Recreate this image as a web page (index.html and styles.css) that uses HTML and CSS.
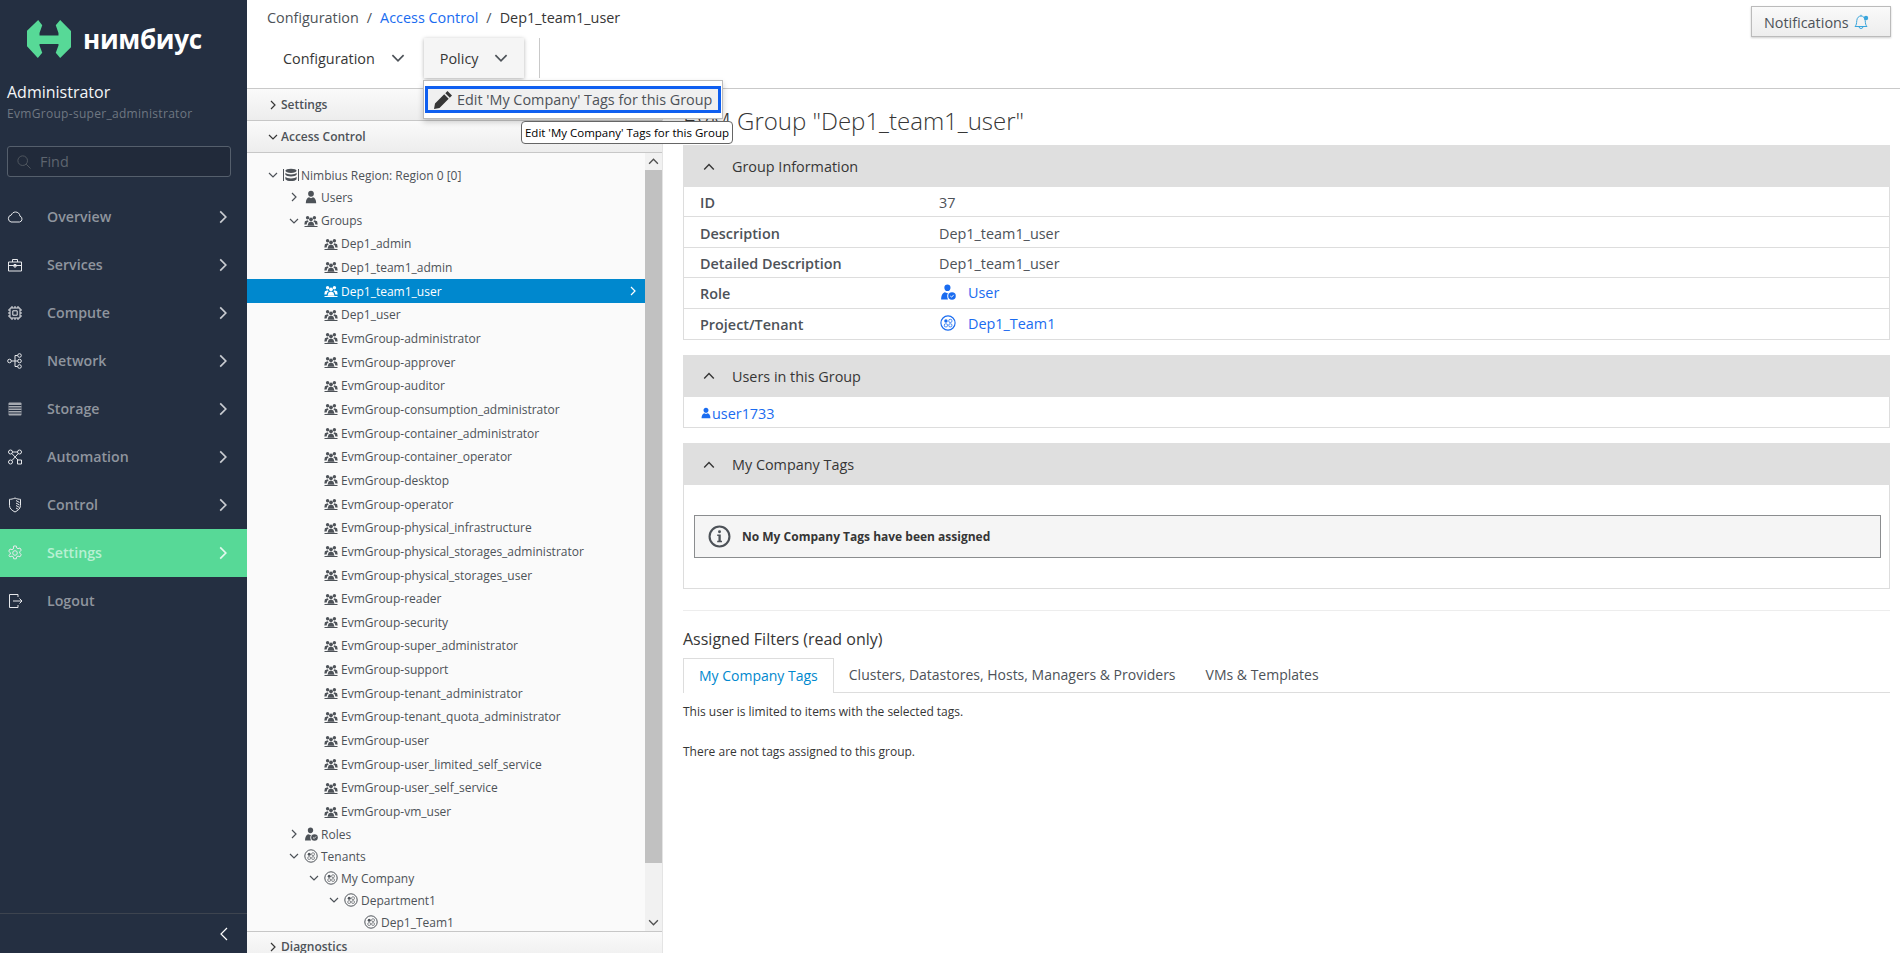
FILE: index.html
```html
<!DOCTYPE html>
<html lang="en">
<head>
<meta charset="utf-8">
<title>Access Control</title>
<link rel="stylesheet" href="styles.css">
</head>
<body>
<svg class="defs" aria-hidden="true">
  <symbol id="chev-r" viewBox="0 0 10 10"><path d="M3 1l4 4-4 4" fill="none" stroke="currentColor" stroke-width="1.2"/></symbol>
  <symbol id="chev-d" viewBox="0 0 10 10"><path d="M1 3l4 4 4-4" fill="none" stroke="currentColor" stroke-width="1.2"/></symbol>
  <symbol id="chev-u" viewBox="0 0 10 10"><path d="M1 7l4-4 4 4" fill="none" stroke="currentColor" stroke-width="1.2"/></symbol>
  <symbol id="group" viewBox="0 0 14 14"><g fill="currentColor"><circle cx="3.600" cy="3.800" r="1.700"/><circle cx="10.400" cy="3.800" r="1.700"/><circle cx="7" cy="5.300" r="1.900"/><path d="M.3 10.500l.6-3.200 2.600-1 1.200.9-1.500 1.300-.6 2zM13.700 10.500l-.6-3.200-2.600-1-1.200.9 1.500 1.300.6 2zM3.500 11.700l1.100-3.100 2.400-1 2.400 1 1.100 3.100z"/><path d="M.5 12h13v1H.5z"/></g></symbol>
  <symbol id="user" viewBox="0 0 14 14"><path fill="currentColor" d="M7 .8c1.700 0 2.900 1.200 2.900 2.900S8.700 6.700 7 6.700 4.100 5.400 4.100 3.700 5.300.8 7 .8zM1.800 13.200c0-3.500 1.600-5.700 3.200-5.900L7 8.200l2-.9c1.600.2 3.200 2.400 3.200 5.900z"/></symbol>
  <symbol id="role" viewBox="0 0 14 14"><path fill="currentColor" d="M6.500.5c1.600 0 2.700 1.100 2.700 2.700S8.100 6.200 6.500 6.200 3.800 4.900 3.800 3.200 4.900.5 6.500.5zM1 13.500c0-3.800 1.700-6 3.300-6.300l2.200.9 1-.4C6.200 8.500 5.800 10.800 7 13.500z"/><circle cx="10.500" cy="10.500" r="3.300" fill="currentColor"/><path d="M9 10.500l1.200 1 1.800-2" fill="none" stroke="#fff" stroke-width=".8"/></symbol>
  <symbol id="tenant" viewBox="0 0 14 14"><circle cx="7" cy="7" r="6.200" fill="none" stroke="currentColor"/><circle cx="5.200" cy="5.200" r="1.500" fill="currentColor"/><rect x="7.700" y="3.800" width="2.700" height="2.700" rx="1" fill="none" stroke="currentColor" stroke-width=".7"/><rect x="3.800" y="7.700" width="2.700" height="2.700" rx="1" fill="none" stroke="currentColor" stroke-width=".7"/><rect x="7.700" y="7.700" width="2.700" height="2.700" rx="1" fill="none" stroke="currentColor" stroke-width=".7"/></symbol>
  <symbol id="database" viewBox="0 0 16 14"><path d="M.5 1v12M15.500 1v12" stroke="currentColor" fill="none"/><ellipse cx="8" cy="2.800" rx="5.600" ry="2.100" fill="currentColor"/><path fill="currentColor" d="M2.400 4.800c1 1.200 3 1.600 5.600 1.600s4.600-.4 5.600-1.600v2c-1 1.200-3 1.600-5.600 1.600s-4.600-.4-5.600-1.600zM2.400 8.800c1 1.200 3 1.600 5.600 1.600s4.600-.4 5.600-1.600v2.400c-1 1.300-3 1.800-5.600 1.800s-4.600-.5-5.600-1.800z"/></symbol>
</svg>

<div class="app">
  <aside class="sidebar">
    <div class="brand">
      <svg class="brand-mark" viewBox="0 0 130 113"><path fill="#57d997" d="M33 0l12 16-8 23v7h56v-7l-8-23 13-16 32 33 1 47-33 33-13-16 8-21v-5H37v5l8 21-13 16L0 78V32z"/></svg>
      <span class="brand-name">нимбиус</span>
    </div>
    <div class="profile">
      <div class="profile-name">Administrator</div>
      <div class="profile-group">EvmGroup-super_administrator</div>
    </div>
    <div class="find">
      <svg class="find-icon" viewBox="0 0 16 16"><circle cx="6.500" cy="6.500" r="5.500" fill="none" stroke="currentColor"/><path d="M10.500 10.500l5 5" stroke="currentColor"/></svg>
      <span>Find</span>
    </div>
    <nav class="nav">
      <a class="nav-item"><svg class="nav-icon" viewBox="0 0 16 16"><path d="M4 13h8.500a3 3 0 0 0 .5-5.800C12.700 4.500 10.800 3 8.500 3 6.500 3 5 4.200 4.300 6A3.600 3.600 0 0 0 4 13z"/></svg><span class="nav-label">Overview</span><svg class="nav-chev"><use href="#chev-r"/></svg></a>
      <a class="nav-item"><svg class="nav-icon" viewBox="0 0 16 16"><path d="M1.500 5h13v9h-13zM5.500 5V2.500h5V5M1.500 8.500h13"/><path d="M7 7.500h2v2.500H7z"/></svg><span class="nav-label">Services</span><svg class="nav-chev"><use href="#chev-r"/></svg></a>
      <a class="nav-item"><svg class="nav-icon" viewBox="0 0 16 16"><path d="M3 3h10v10H3z"/><path d="M5.800 5.800h4.400v4.400H5.800z"/><path d="M5 1v2M8 1v2M11 1v2M5 13v2M8 13v2M11 13v2M1 5h2M1 8h2M1 11h2M13 5h2M13 8h2M13 11h2"/></svg><span class="nav-label">Compute</span><svg class="nav-chev"><use href="#chev-r"/></svg></a>
      <a class="nav-item"><svg class="nav-icon" viewBox="0 0 16 16"><circle cx="2.500" cy="8" r="1.800"/><circle cx="12.500" cy="2.500" r="1.800"/><circle cx="12.500" cy="8" r="1.800"/><circle cx="12.500" cy="13.500" r="1.800"/><path d="M4.300 8h6.400M8 8V2.500h2.700M8 8v5.500h2.700"/></svg><span class="nav-label">Network</span><svg class="nav-chev"><use href="#chev-r"/></svg></a>
      <a class="nav-item"><svg class="nav-icon" viewBox="0 0 16 16"><rect x="1.500" y="1.500" width="13" height="13" rx="1" fill="#a5a9b0" stroke="none"/><path class="nav-cut" d="M1.500 4.500h13M1.500 7h13M1.500 9.500h13M1.500 12h13"/></svg><span class="nav-label">Storage</span><svg class="nav-chev"><use href="#chev-r"/></svg></a>
      <a class="nav-item"><svg class="nav-icon" viewBox="0 0 16 16"><circle cx="3.500" cy="3" r="2"/><circle cx="12.500" cy="3" r="2"/><circle cx="3.500" cy="13" r="2"/><path d="M10.500 11h4v4h-4zM5.500 3h5M4.800 4.500l6.200 6.500M11.200 4.600L5 11.500"/></svg><span class="nav-label">Automation</span><svg class="nav-chev"><use href="#chev-r"/></svg></a>
      <a class="nav-item"><svg class="nav-icon" viewBox="0 0 16 16"><path d="M8 1c2 1 4 1.300 5.500 1.300v6.200c0 3-2.500 5-5.500 6.500-3-1.500-5.500-3.500-5.500-6.500V2.300C4 2.300 6 2 8 1z"/><path d="M9 3.500l3.500 2M9 6l3.500 2M9 8.500l3.500 2M9 11l2 1.200"/></svg><span class="nav-label">Control</span><svg class="nav-chev"><use href="#chev-r"/></svg></a>
      <a class="nav-item nav-active"><svg class="nav-icon" viewBox="0 0 16 16"><path d="M6.700 1h2.600l.4 2 1.300.7 2-.7 1.300 2.300-1.600 1.300v1.600l1.600 1.300-1.300 2.300-2-.7-1.300.7-.4 2H6.700l-.4-2-1.300-.7-2 .7L1.700 10.500 3.300 9.200V7.600L1.700 6.300 3 4l2 .7 1.300-.7z"/><circle cx="8" cy="8" r="2.300"/></svg><span class="nav-label">Settings</span><svg class="nav-chev"><use href="#chev-r"/></svg></a>
      <a class="nav-item"><svg class="nav-icon" viewBox="0 0 16 16"><path d="M11 4V1.500H2.500v13H11V12M6 8h9M12.500 5.500L15 8l-2.500 2.500"/></svg><span class="nav-label">Logout</span></a>
    </nav>
    <div class="collapse"><svg class="back" viewBox="0 0 10 14"><path d="M8 1L2 7l6 6" fill="none" stroke="currentColor" stroke-width="1.200"/></svg></div>
  </aside>

  <div class="workspace">
    <header class="topbar">
      <div class="topbar-left">
        <div class="crumbs"><span>Configuration</span><span class="sep">/</span><a class="link">Access Control</a><span class="sep">/</span><span class="crumb-now">Dep1_team1_user</span></div>
        <div class="toolbar">
          <button class="tool tool-first">Configuration<svg class="tool-chev"><use href="#chev-d"/></svg></button>
          <button class="tool tool-open">Policy<svg class="tool-chev"><use href="#chev-d"/></svg></button>
          <span class="tool-sep"></span>
        </div>
      </div>
      <button class="notify">Notifications<svg class="bell" viewBox="0 0 16 16"><path d="M2 12.500c1.500-1.500 1.500-3 1.800-6C4 3.800 5.800 2 8 2s4 1.800 4.200 4.500c.3 3 .3 4.500 1.800 6zM6 12.500a2 2 0 0 0 4 0M8 2V.8" fill="none" stroke="currentColor"/><circle cx="13" cy="4" r="2.200" fill="currentColor"/></svg></button>
    </header>

    <div class="columns">
      <div class="accordion">
        <div class="acc-head"><svg class="acc-chev"><use href="#chev-r"/></svg>Settings</div>
        <div class="acc-head"><svg class="acc-chev"><use href="#chev-d"/></svg>Access Control</div>
        <div class="tree-wrap">
          <ul class="tree">
            <li class="row l0"><svg class="tw"><use href="#chev-d"/></svg><svg class="ti ti-db"><use href="#database"/></svg><span class="tt">Nimbius Region: Region 0 [0]</span></li>
            <li class="row l1"><svg class="tw"><use href="#chev-r"/></svg><svg class="ti"><use href="#user"/></svg>Users</li>
            <li class="row l1 r-groups"><svg class="tw"><use href="#chev-d"/></svg><svg class="ti"><use href="#group"/></svg>Groups</li>
            <li class="row l2 g"><svg class="ti"><use href="#group"/></svg>Dep1_admin</li>
            <li class="row l2 g"><svg class="ti"><use href="#group"/></svg>Dep1_team1_admin</li>
            <li class="row l2 g selected"><svg class="ti"><use href="#group"/></svg>Dep1_team1_user<svg class="sel-chev"><use href="#chev-r"/></svg></li>
            <li class="row l2 g"><svg class="ti"><use href="#group"/></svg>Dep1_user</li>
            <li class="row l2 g"><svg class="ti"><use href="#group"/></svg>EvmGroup-administrator</li>
            <li class="row l2 g"><svg class="ti"><use href="#group"/></svg>EvmGroup-approver</li>
            <li class="row l2 g"><svg class="ti"><use href="#group"/></svg>EvmGroup-auditor</li>
            <li class="row l2 g"><svg class="ti"><use href="#group"/></svg>EvmGroup-consumption_administrator</li>
            <li class="row l2 g"><svg class="ti"><use href="#group"/></svg>EvmGroup-container_administrator</li>
            <li class="row l2 g"><svg class="ti"><use href="#group"/></svg>EvmGroup-container_operator</li>
            <li class="row l2 g"><svg class="ti"><use href="#group"/></svg>EvmGroup-desktop</li>
            <li class="row l2 g"><svg class="ti"><use href="#group"/></svg>EvmGroup-operator</li>
            <li class="row l2 g"><svg class="ti"><use href="#group"/></svg>EvmGroup-physical_infrastructure</li>
            <li class="row l2 g"><svg class="ti"><use href="#group"/></svg>EvmGroup-physical_storages_administrator</li>
            <li class="row l2 g"><svg class="ti"><use href="#group"/></svg>EvmGroup-physical_storages_user</li>
            <li class="row l2 g"><svg class="ti"><use href="#group"/></svg>EvmGroup-reader</li>
            <li class="row l2 g"><svg class="ti"><use href="#group"/></svg>EvmGroup-security</li>
            <li class="row l2 g"><svg class="ti"><use href="#group"/></svg>EvmGroup-super_administrator</li>
            <li class="row l2 g"><svg class="ti"><use href="#group"/></svg>EvmGroup-support</li>
            <li class="row l2 g"><svg class="ti"><use href="#group"/></svg>EvmGroup-tenant_administrator</li>
            <li class="row l2 g"><svg class="ti"><use href="#group"/></svg>EvmGroup-tenant_quota_administrator</li>
            <li class="row l2 g"><svg class="ti"><use href="#group"/></svg>EvmGroup-user</li>
            <li class="row l2 g"><svg class="ti"><use href="#group"/></svg>EvmGroup-user_limited_self_service</li>
            <li class="row l2 g"><svg class="ti"><use href="#group"/></svg>EvmGroup-user_self_service</li>
            <li class="row l2 g"><svg class="ti"><use href="#group"/></svg>EvmGroup-vm_user</li>
            <li class="row l1"><svg class="tw"><use href="#chev-r"/></svg><svg class="ti"><use href="#role"/></svg>Roles</li>
            <li class="row l1"><svg class="tw"><use href="#chev-d"/></svg><svg class="ti"><use href="#tenant"/></svg>Tenants</li>
            <li class="row l2"><svg class="tw"><use href="#chev-d"/></svg><svg class="ti"><use href="#tenant"/></svg>My Company</li>
            <li class="row l3"><svg class="tw"><use href="#chev-d"/></svg><svg class="ti"><use href="#tenant"/></svg>Department1</li>
            <li class="row l4"><svg class="ti"><use href="#tenant"/></svg>Dep1_Team1</li>
          </ul>
          <div class="scrollbar">
            <span class="sb-btn"><svg class="sb-arrow"><use href="#chev-u"/></svg></span>
            <span class="sb-thumb"></span>
            <span class="sb-rest"></span>
            <span class="sb-btn"><svg class="sb-arrow"><use href="#chev-d"/></svg></span>
          </div>
        </div>
        <div class="acc-head acc-last"><svg class="acc-chev"><use href="#chev-r"/></svg>Diagnostics</div>
      </div>

      <main class="main">
        <h1 class="title">EVM Group "Dep1_team1_user"</h1>

        <section class="panel">
          <h2 class="panel-head"><svg class="panel-chev"><use href="#chev-u"/></svg>Group Information</h2>
          <div class="kv"><span class="k">ID</span><span class="v">37</span></div>
          <div class="kv"><span class="k">Description</span><span class="v">Dep1_team1_user</span></div>
          <div class="kv"><span class="k">Detailed Description</span><span class="v">Dep1_team1_user</span></div>
          <div class="kv"><span class="k">Role</span><a class="v link v-icon"><svg class="kv-icon"><use href="#role"/></svg>User</a></div>
          <div class="kv"><span class="k">Project/Tenant</span><a class="v link v-icon"><svg class="kv-icon"><use href="#tenant"/></svg>Dep1_Team1</a></div>
        </section>

        <section class="panel">
          <h2 class="panel-head"><svg class="panel-chev"><use href="#chev-u"/></svg>Users in this Group</h2>
          <div class="kv"><a class="link user-link"><svg class="user-icon"><use href="#user"/></svg>user1733</a></div>
        </section>

        <section class="panel">
          <h2 class="panel-head"><svg class="panel-chev"><use href="#chev-u"/></svg>My Company Tags</h2>
          <div class="panel-body">
            <div class="alert"><svg class="alert-icon" viewBox="0 0 22 22"><circle cx="11" cy="11" r="9.500" fill="none" stroke="currentColor" stroke-width="2"/><circle cx="11" cy="6.500" r="1.400" fill="currentColor"/><path fill="currentColor" d="M8.800 9h3.400v6h1.200v1.500H8.800V15H10v-4.500H8.800z"/></svg>No My Company Tags have been assigned</div>
          </div>
        </section>

        <hr class="rule">
        <h3 class="sub">Assigned Filters (read only)</h3>
        <div class="tabs">
          <span class="tab tab-on">My Company Tags</span>
          <span class="tab">Clusters, Datastores, Hosts, Managers &amp; Providers</span>
          <span class="tab">VMs &amp; Templates</span>
        </div>
        <p class="note">This user is limited to items with the selected tags.</p>
        <p class="note note-2">There are not tags assigned to this group.</p>
      </main>
    </div>
  </div>

  <div class="menu">
    <div class="menu-item"><svg class="pencil" viewBox="0 0 20 20"><path fill="currentColor" d="M14.500 1l4.500 4.500-2.200 2.200-4.500-4.500zM11.200 4.300l4.500 4.500L6.500 18 1 19l1-5.500z"/></svg>Edit 'My Company' Tags for this Group</div>
  </div>
  <div class="tooltip">Edit 'My Company' Tags for this Group</div>
</div>
</body>
</html>
```
FILE: styles.css
```css
* { box-sizing: border-box; }
html, body { margin: 0; height: 100%; overflow: hidden; }
body { font-family: "Open Sans", "Liberation Sans", sans-serif; font-size: 14.4px; color: #4d5258; background: #fff; }
.defs { position: absolute; width: 0; height: 0; }
.app { position: relative; display: flex; width: 1900px; height: 953px; overflow: hidden; }
.link { color: #1a6cf0; }

/* sidebar */
.sidebar { width: 247px; flex: none; background: #242f41; display: flex; flex-direction: column; color: #fff; }
.brand { display: flex; align-items: center; height: 76px; padding: 2px 0 0 27px; }
.brand-mark { width: 44px; height: 40px; }
.brand-name { margin-left: 12px; font-size: 26px; font-weight: 700; line-height: 30px; color: #fff; letter-spacing: -.3px; }
.profile { padding: 4px 7px 0; }
.profile-name { font-size: 16px; line-height: 24px; color: #f4f6f8; }
.profile-group { margin-top: 1px; font-size: 12px; line-height: 18px; color: #6f7782; letter-spacing: .3px; }
.find { display: flex; align-items: center; margin: 23px 16px 0 7px; height: 31px; background: #212a3a; border: 1px solid #555f6c; border-radius: 3px; font-size: 14.4px; color: #5e656f; padding-left: 9px; }
.find-icon { width: 14px; height: 14px; margin-right: 9px; color: #555b64; }
.nav { margin-top: 16px; display: flex; flex-direction: column; }
.nav-item { display: flex; align-items: center; height: 48px; padding: 0 0 1px 7px; font-size: 14.2px; font-weight: 600; color: #8f959e; }
.nav-icon { width: 16px; height: 16px; fill: none; stroke: #e6e8eb; stroke-width: 1; flex: none; }
.nav-cut { stroke: #242f41; }
.nav-label { margin-left: 24px; flex: 1; }
.nav-chev { width: 14px; height: 14px; margin-right: 17px; color: #c9ccd1; }
.nav-active { background: #57d997; color: #b8f0d3; }
.nav-active .nav-chev { color: #e4f8ee; }
.collapse { margin-top: auto; height: 40px; border-top: 1px solid #3d444f; display: flex; align-items: center; justify-content: flex-end; padding: 0 18px 0 0; color: #fff; }
.back { width: 10px; height: 14px; }

/* top bar */
.workspace { flex: 1; display: flex; flex-direction: column; min-width: 0; }
.topbar { height: 89px; flex: none; display: flex; justify-content: space-between; border-bottom: 1px solid #c9c9c9; }
.topbar-left { padding-left: 20px; }
.crumbs { display: flex; align-items: center; height: 34px; color: #4d5258; }
.sep { margin: 0 8px; }
.crumb-now { color: #363636; }
.toolbar { display: flex; align-items: stretch; height: 40px; margin-top: 4px; }
.tool { display: flex; align-items: center; border: 0; background: none; font: inherit; color: #363636; padding: 0 16px; height: 40px; }
.tool-first { margin-right: 3px; }
.tool-chev { width: 14px; height: 14px; margin-left: 16px; color: #4d5258; }
.tool-open { background: #f5f5f5; box-shadow: 0 1px 4px rgba(0,0,0,.3); }
.tool-sep { width: 1px; background: #c9c9c9; margin-left: 15px; }
.notify { margin: 6px 9px 0 0; width: 140px; height: 31px; display: flex; align-items: center; padding: 1px 0 0 12px; border: 1px solid #bbb; background: linear-gradient(#fafafa, #ededed); box-shadow: 0 1px 2px rgba(0,0,0,.2); font: inherit; color: #4d5258; }
.bell { width: 16px; height: 16px; margin-left: 4px; color: #39a5dc; }

/* accordion + tree */
.columns { flex: 1; display: flex; min-height: 0; }
.accordion { width: 416px; flex: none; display: flex; flex-direction: column; border-right: 1px solid #e4e4e4; overflow: hidden; }
.acc-head { flex: none; height: 32px; display: flex; align-items: center; padding-left: 21px; font-size: 12px; font-weight: 600; color: #4d5258; background: linear-gradient(#fafafa, #ededed); border-bottom: 1px solid #c7c7c7; }
.acc-chev { width: 10px; height: 10px; margin-right: 3px; color: #363636; }
.acc-last { border-top: 1px solid #c7c7c7; border-bottom: 0; padding-bottom: 2px; }
.tree-wrap { flex: none; height: 778px; display: flex; background: #fafafa; overflow: hidden; }
.tree { flex: 1; list-style: none; margin: 0; padding: 11px 0 0; font-size: 12px; color: #4d5258; overflow: hidden; }
.row { position: relative; display: flex; align-items: center; height: 22px; white-space: nowrap; }
.r-groups { height: 24px; padding-top: 1px; }
.g { height: 23.67px; }
.l0 { padding-left: 21px; }
.l1 { padding-left: 42px; }
.l2 { padding-left: 62px; }
.l3 { padding-left: 82px; }
.g.l2 { padding-left: 77px; }
.l4 { padding-left: 117px; }
.tw { width: 10px; height: 10px; margin-right: 5px; flex: none; color: #4d5258; }
.ti { width: 14px; height: 14px; margin-right: 3px; flex: none; color: #4d5258; }
.ti-db { width: 16px; margin-right: 2px; }
.selected { background: #0088ce; color: #fff; }
.selected .ti { color: #fff; }
.sel-chev { position: absolute; right: 7px; top: 7px; width: 10px; height: 10px; color: #fff; }
.scrollbar { width: 17px; flex: none; display: flex; flex-direction: column; background: #f1f1f1; }
.sb-btn { height: 17px; flex: none; display: flex; align-items: center; justify-content: center; }
.sb-arrow { width: 11px; height: 11px; color: #505050; }
.sb-thumb { height: 693px; background: #c1c1c1; flex: none; }
.sb-rest { flex: 1; }

/* main */
.main { flex: 1; min-width: 0; padding: 0 10px 0 20px; }
.title { margin: 0; height: 56px; display: flex; align-items: center; font-size: 24px; font-weight: 300; color: #363636; padding-top: 7px; white-space: nowrap; }
.panel { border: 1px solid #ddd; border-top: 0; margin-bottom: 15px; }
.panel-head { margin: 0 -1px; height: 42px; display: flex; align-items: center; padding: 1px 0 0 20px; background: #dfdfdf; font-size: 14.4px; font-weight: 400; color: #363636; }
.panel-chev { width: 12px; height: 12px; margin-right: 17px; color: #363636; }
.kv { display: flex; align-items: center; height: 30.4px; padding: 2px 0 0 16px; border-bottom: 1px solid #ddd; }
.kv:last-child { border-bottom: 0; }
.k { width: 239px; flex: none; font-weight: 600; color: #4d5258; }
.v { color: #4d5258; }
.v.link { color: #1a6cf0; }
.v-icon { display: flex; align-items: center; margin-top: -3px; }
.kv-icon { width: 16px; height: 16px; margin: 0 12px 0 1px; color: #1a6cf0; }
.user-link { display: flex; align-items: center; }
.user-icon { width: 12px; height: 14px; color: #1a6cf0; }
.panel-body { padding: 30px 8px 30px 10px; }
.alert { display: flex; align-items: center; height: 43px; padding-left: 13px; background: #f5f5f5; border: 1px solid #8b8d8f; font-size: 12px; font-weight: 700; color: #363636; }
.alert-icon { width: 23px; height: 23px; margin-right: 11px; color: #4d5258; }
.rule { margin: 21px 0 0; border: 0; border-top: 1px solid #ededed; }
.sub { margin: 16px 0 1px; font-size: 16px; font-weight: 400; line-height: 24px; color: #363636; }
.tabs { display: flex; height: 35px; margin-top: 7px; border-bottom: 1px solid #ddd; font-size: 14px; }
.tab { display: flex; align-items: center; height: 35px; padding: 0 15px 2px; color: #4d5258; }
.tab-on { color: #0088ce; background: #fff; border: 1px solid #ddd; border-bottom: 0; }
.note { margin: 10px 0 0; font-size: 12px; line-height: 18px; color: #363636; }
.note-2 { margin-top: 22px; }

/* overlays */
.menu { position: absolute; left: 423px; top: 80px; width: 300px; height: 39px; background: #fff; border: 1px solid #bbb; box-shadow: 0 3px 6px rgba(0,0,0,.2); padding: 5px 1px 0; }
.menu-item { display: flex; align-items: center; height: 27px; padding-left: 5px; background: #f0f0f0; border: 3px solid #0f5ff0; color: #4d5258; white-space: nowrap; }
.pencil { width: 20px; height: 20px; margin-right: 4px; color: #363636; flex: none; }
.tooltip { position: absolute; left: 521px; top: 121px; width: 212px; height: 23px; display: flex; align-items: center; justify-content: center; background: #fff; border: 1px solid #666; border-radius: 4px; font-size: 11.5px; color: #000; white-space: nowrap; }
```
